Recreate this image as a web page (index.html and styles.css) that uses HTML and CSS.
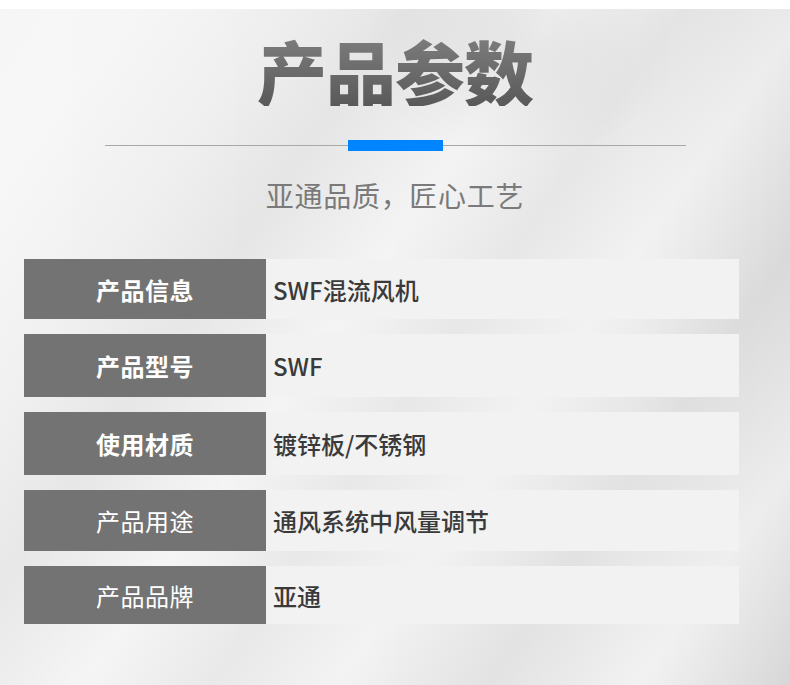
FILE: index.html
```html
<!DOCTYPE html>
<html lang="zh-CN">
<head>
<meta charset="utf-8">
<title>产品参数</title>
<link rel="stylesheet" href="styles.css">
</head>
<body>
<div class="page">
  <h1 class="title">产品参数</h1>
  <div class="divider"><span class="divider-mark"></span></div>
  <p class="subtitle">亚通品质，匠心工艺</p>
  <div class="params">
    <div class="row">
      <div class="label strong">产品信息</div>
      <div class="value">SWF混流风机</div>
    </div>
    <div class="row">
      <div class="label strong">产品型号</div>
      <div class="value">SWF</div>
    </div>
    <div class="row">
      <div class="label strong">使用材质</div>
      <div class="value">镀锌板/不锈钢</div>
    </div>
    <div class="row">
      <div class="label">产品用途</div>
      <div class="value">通风系统中风量调节</div>
    </div>
    <div class="row">
      <div class="label">产品品牌</div>
      <div class="value">亚通</div>
    </div>
  </div>
</div>
</body>
</html>
```

FILE: styles.css
```css
html, body {
  margin: 0;
  padding: 0;
  background: #ffffff;
}

body {
  padding-top: 9px;
  font-family: "Noto Sans CJK SC", "Noto Sans", sans-serif;
}

.page {
  height: 676px;
  box-sizing: border-box;
  padding-top: 27px;
  background-color: #ebebeb;
  background-image:
    radial-gradient(ellipse 160px 110px at 520px 40px, rgba(0,0,0,0.05), rgba(0,0,0,0)),
    linear-gradient(125deg, rgba(255,255,255,0.45) 0%, rgba(255,255,255,0.5) 10%, rgba(255,255,255,0.1) 22%, rgba(0,0,0,0.03) 32%, rgba(255,255,255,0.4) 44%, rgba(0,0,0,0.02) 54%, rgba(255,255,255,0.35) 64%, rgba(0,0,0,0.04) 76%, rgba(255,255,255,0.35) 88%, rgba(0,0,0,0.05) 100%),
    linear-gradient(90deg, rgba(255,255,255,0.2) 0%, rgba(255,255,255,0) 80%, rgba(0,0,0,0.04) 100%);
  overflow: hidden;
}

.title {
  margin: 0 auto;
  width: max-content;
  font-size: 70px;
  line-height: 70px;
  font-weight: 900;
  letter-spacing: -1px;
  color: #666;
  background: linear-gradient(180deg, #7d7d7d 0%, #595959 100%);
  -webkit-background-clip: text;
  background-clip: text;
  -webkit-text-fill-color: transparent;
}

.divider {
  margin: 34px auto 0;
  width: 581px;
  height: 11px;
  display: flex;
  justify-content: center;
  align-items: center;
  background: linear-gradient(#a8a8a8, #a8a8a8) center / 100% 1px no-repeat;
}

.divider-mark {
  display: block;
  width: 95px;
  height: 11px;
  background: #0084ff;
}

.subtitle {
  margin: 30px 0 0;
  text-align: center;
  font-size: 28px;
  line-height: 28px;
  font-weight: 400;
  letter-spacing: 0.7px;
  color: #7a7a7a;
}

.params {
  margin: 50px 0 0 24px;
  width: 715px;
  display: grid;
  grid-template-rows: 60px 63px 63px 61px 58px;
  row-gap: 15px;
}

.row {
  display: grid;
  grid-template-columns: 242px 1fr;
}

.label {
  display: flex;
  align-items: center;
  justify-content: center;
  background: #737373;
  color: #ffffff;
  font-size: 24px;
  font-weight: 400;
  letter-spacing: 0.5px;
}

.label.strong {
  font-weight: 700;
}

.value {
  display: flex;
  align-items: center;
  padding-left: 7px;
  background: #f2f2f2;
  color: #3a3a3a;
  font-size: 24px;
  font-weight: 500;
}
```
